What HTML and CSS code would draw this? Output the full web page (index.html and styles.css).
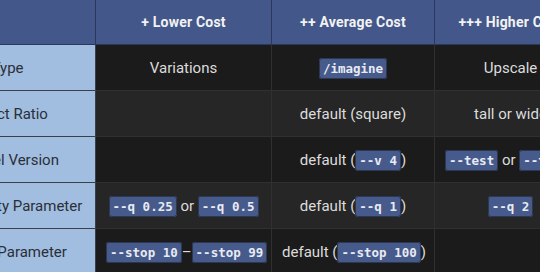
FILE: index.html
```html
<!DOCTYPE html>
<html lang="en">
<head>
    <meta charset="utf-8">
    <title>Cost Comparison</title>
    <link rel="stylesheet" href="styles.css">
</head>
<body>
    <div class="table-scroll">
        <table class="cost-table">
            <colgroup>
                <col class="col-label">
                <col class="col-low">
                <col class="col-avg">
                <col class="col-high">
            </colgroup>
            <thead>
                <tr>
                    <th></th>
                    <th>+ Lower Cost</th>
                    <th>++ Average Cost</th>
                    <th>+++ Higher Cost</th>
                </tr>
            </thead>
            <tbody>
                <tr>
                    <td>Job Type</td>
                    <td>Variations</td>
                    <td><code>/imagine</code></td>
                    <td>Upscale</td>
                </tr>
                <tr>
                    <td>Aspect Ratio</td>
                    <td></td>
                    <td>default (square)</td>
                    <td>tall or wide</td>
                </tr>
                <tr>
                    <td>Model Version</td>
                    <td></td>
                    <td>default (<code>--v 4</code>)</td>
                    <td><code>--test</code> or <code>--testp</code></td>
                </tr>
                <tr>
                    <td>Quality Parameter</td>
                    <td><code>--q 0.25</code> or <code>--q 0.5</code></td>
                    <td>default (<code>--q 1</code>)</td>
                    <td><code>--q 2</code></td>
                </tr>
                <tr>
                    <td>Stop Parameter</td>
                    <td><code>--stop 10</code>–<code>--stop 99</code></td>
                    <td>default (<code>--stop 100</code>)</td>
                    <td></td>
                </tr>
            </tbody>
        </table>
    </div>
</body>
</html>
```

FILE: styles.css
```css
html,
body {
    margin: 0;
    padding: 0;
    background: #1b1b1b;
}

.table-scroll {
    width: 540px;
    height: 272px;
    overflow: hidden;
}

.cost-table {
    width: 633px;
    border-collapse: collapse;
    margin-left: -47px;
    font-family: Roboto, "Liberation Sans", sans-serif;
    font-size: 15px;
    color: #dcdcdc;
    white-space: nowrap;
    table-layout: fixed;
}

.col-label { width: 142px; }
.col-low { width: 176px; }
.col-avg { width: 163px; }
.col-high { width: 152px; }

.cost-table th {
    height: 44px;
    padding: 0 10px;
    background: #43578a;
    color: #f2f2f2;
    font-size: 14px;
    font-weight: bold;
    letter-spacing: 0.2px;
    text-align: center;
    border: 1px solid #2c3858;
    border-top: none;
}

.cost-table td {
    height: 45px;
    padding: 0 10px;
    text-align: center;
    vertical-align: middle;
    border: 1px solid #303030;
}

.cost-table tbody tr:nth-child(odd) td {
    background: #1b1b1b;
}

.cost-table tbody tr:nth-child(even) td {
    background: #262626;
}

.cost-table tbody tr td:first-child {
    text-align: left;
    padding-left: 9px;
    background: #a1bee1;
    color: #2b2f38;
    border-color: #3a3f48;
}

.cost-table code {
    font-family: "DejaVu Sans Mono", monospace;
    font-size: 12.5px;
    font-weight: bold;
    color: #e8ebf2;
    background: #465a8c;
    border: 1px solid #2c3754;
    border-radius: 3px;
    padding: 2px 3px;
}
```
